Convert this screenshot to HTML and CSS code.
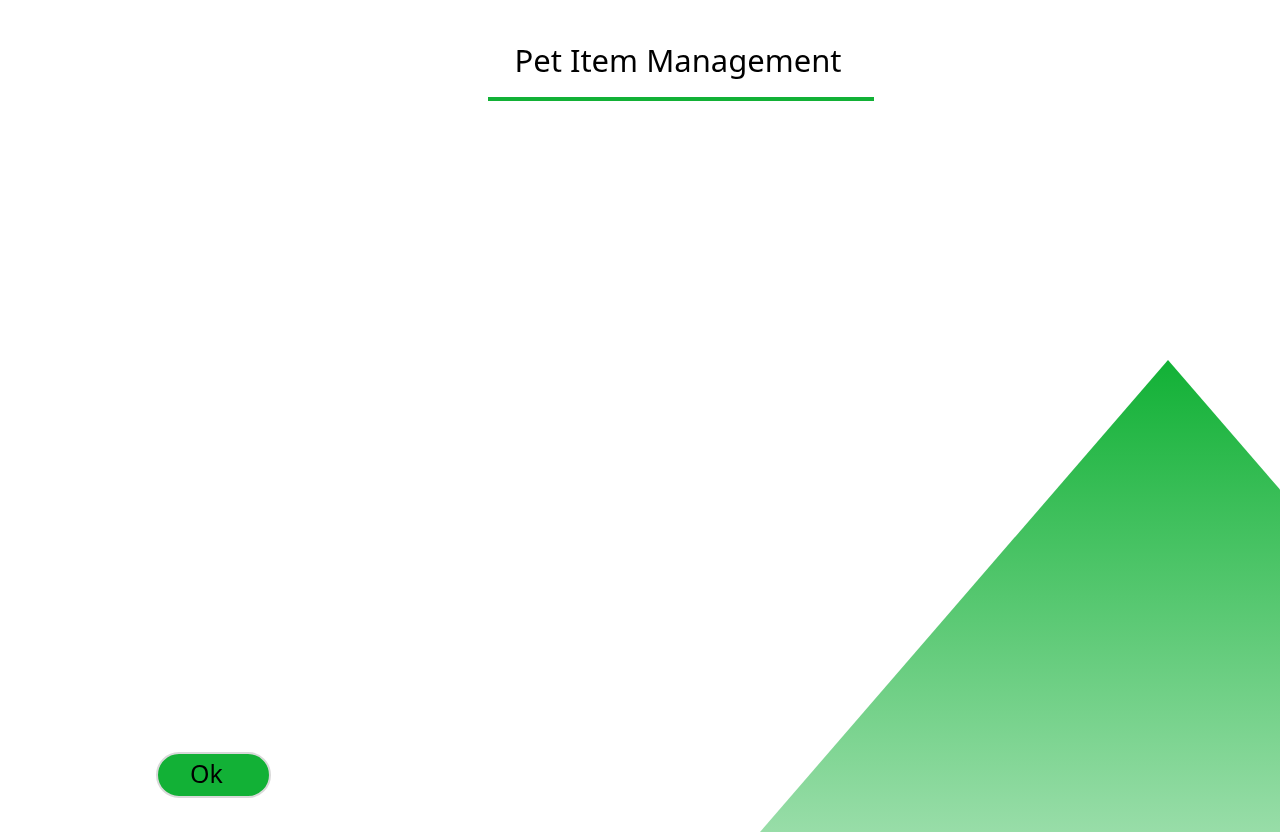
FILE: index.html
```html
<!DOCTYPE html>
<html lang="en">
<head>
<meta charset="utf-8">
<meta name="viewport" content="width=device-width, initial-scale=1">
<title>Pet Item Management</title>
<link rel="stylesheet" href="styles.css">
</head>
<body>
<svg class="backdrop" viewBox="0 0 520 472" aria-hidden="true">
  <defs>
    <linearGradient id="fade" x1="0" y1="0" x2="0" y2="472" gradientUnits="userSpaceOnUse">
      <stop offset="0" stop-color="#12b136"/>
      <stop offset="1" stop-color="#98dda8"/>
    </linearGradient>
  </defs>
  <path d="M408 0L520 129.5V472H0Z" fill="url(#fade)"/>
</svg>
<main class="page">
  <header class="header">
    <h1 class="title">Pet Item Management</h1>
  </header>
  <footer class="actions">
    <button class="ok-button" type="button">Ok</button>
  </footer>
</main>
</body>
</html>
```
FILE: styles.css
```css
* {
  box-sizing: border-box;
}

body {
  margin: 0;
  background: #fff;
  color: #000;
  font-family: "Noto Sans", sans-serif;
}

.backdrop {
  position: fixed;
  right: 0;
  bottom: 0;
  width: 520px;
  z-index: -1;
}

.page {
  display: flex;
  flex-direction: column;
  justify-content: space-between;
  min-height: 100vh;
  padding: 40px 0 34px;
}

.header {
  display: flex;
  justify-content: center;
  padding-left: 82px;
}

.title {
  min-width: 386px;
  margin: 0;
  padding: 0 30px 17px 24px;
  border-bottom: 4px solid #12b136;
  font-size: 31px;
  font-weight: 400;
  line-height: 40px;
  text-align: center;
}

.actions {
  padding: 0 156px;
}

.ok-button {
  min-width: 115px;
  padding: 3px 32px 7px;
  border: 2px solid #d9d9d9;
  border-radius: 23px;
  background: #12b136;
  color: #000;
  font: inherit;
  font-size: 25px;
  line-height: 32px;
  text-align: left;
  vertical-align: top;
}
```
